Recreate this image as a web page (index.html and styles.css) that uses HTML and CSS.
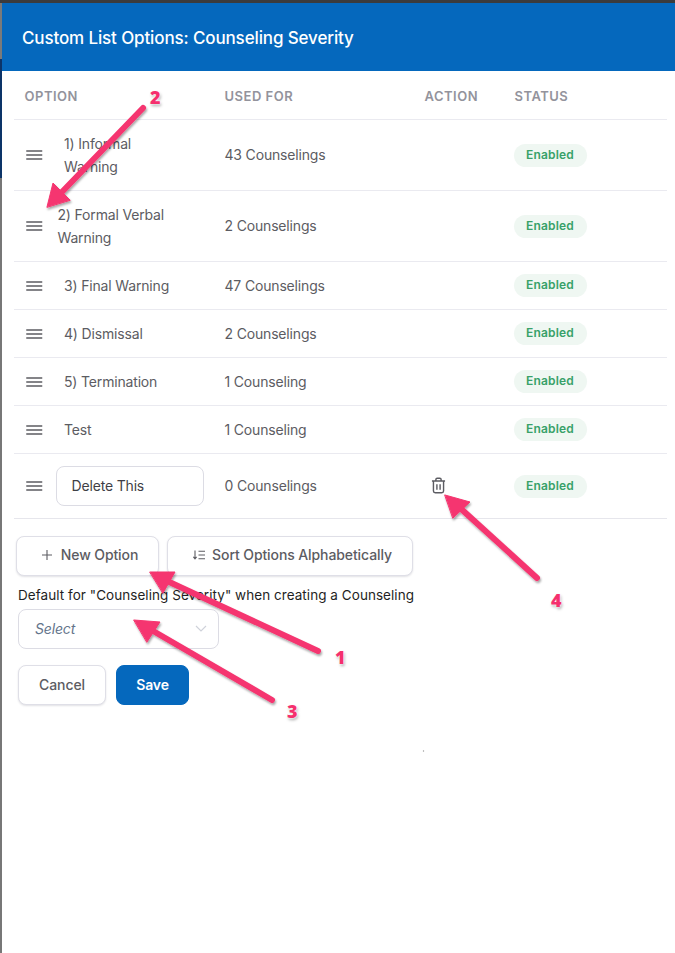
FILE: index.html
```html
<!DOCTYPE html>
<html lang="en">
<head>
<meta charset="utf-8">
<title>Custom List Options</title>
<link rel="stylesheet" href="styles.css">
</head>
<body>
<div class="topline"></div>
<div class="shell">
  <div class="edge"></div>
  <main class="modal">
    <header class="modal-head"><h1>Custom List Options: Counseling Severity</h1></header>
    <div class="table-wrap">
      <table class="options">
        <thead>
          <tr><th class="c-option">OPTION</th><th class="c-used">USED FOR</th><th class="c-action">ACTION</th><th class="c-status">STATUS</th></tr>
        </thead>
        <tbody>
          <tr class="tall"><td><div class="opt"><svg class="drag" viewBox="0 0 16 10"><path d="M0 1h16M0 5h16M0 9h16"/></svg><span class="label">1) Informal Warning</span></div></td><td>43 Counselings</td><td></td><td><span class="badge">Enabled</span></td></tr>
          <tr class="tall"><td><div class="opt"><svg class="drag" viewBox="0 0 16 10"><path d="M0 1h16M0 5h16M0 9h16"/></svg><span class="label narrow">2) Formal Verbal Warning</span></div></td><td>2 Counselings</td><td></td><td><span class="badge">Enabled</span></td></tr>
          <tr><td><div class="opt"><svg class="drag" viewBox="0 0 16 10"><path d="M0 1h16M0 5h16M0 9h16"/></svg><span class="label">3) Final Warning</span></div></td><td>47 Counselings</td><td></td><td><span class="badge">Enabled</span></td></tr>
          <tr><td><div class="opt"><svg class="drag" viewBox="0 0 16 10"><path d="M0 1h16M0 5h16M0 9h16"/></svg><span class="label">4) Dismissal</span></div></td><td>2 Counselings</td><td></td><td><span class="badge">Enabled</span></td></tr>
          <tr><td><div class="opt"><svg class="drag" viewBox="0 0 16 10"><path d="M0 1h16M0 5h16M0 9h16"/></svg><span class="label">5) Termination</span></div></td><td>1 Counseling</td><td></td><td><span class="badge">Enabled</span></td></tr>
          <tr><td><div class="opt"><svg class="drag" viewBox="0 0 16 10"><path d="M0 1h16M0 5h16M0 9h16"/></svg><span class="label">Test</span></div></td><td>1 Counseling</td><td></td><td><span class="badge">Enabled</span></td></tr>
          <tr class="edit"><td><div class="opt"><svg class="drag" viewBox="0 0 16 10"><path d="M0 1h16M0 5h16M0 9h16"/></svg><input class="name" type="text" value="Delete This"></div></td><td>0 Counselings</td><td><svg class="trash" viewBox="0 0 16 18"><path d="M1 4.200h14M5.200 4V2.600c0-.9.6-1.400 1.400-1.400h2.800c.8 0 1.400.5 1.400 1.400V4M2.600 4.400v10.400c0 1.100.8 1.900 1.900 1.900h7c1.100 0 1.900-.8 1.900-1.900V4.400M6.300 7.600v6M9.700 7.600v6"/></svg></td><td><span class="badge">Enabled</span></td></tr>
        </tbody>
      </table>
    </div>
    <div class="tools">
      <button class="btn tool" type="button"><svg class="plus" viewBox="0 0 10 10"><path d="M5 0v10M0 5h10"/></svg>New Option</button>
      <button class="btn tool" type="button"><svg class="sort" viewBox="0 0 12 10"><path d="M2 0.500v8M.4 6.800 2 8.800l1.600-2M5.500 1.200H12M5.500 5H12M5.500 8.800H12"/></svg>Sort Options Alphabetically</button>
    </div>
    <p class="default-label">Default for "Counseling Severity" when creating a Counseling</p>
    <div class="select"><span>Select</span><svg class="chev" viewBox="0 0 12 7"><path d="M1 1l5 5 5-5"/></svg></div>
    <div class="actions">
      <button class="btn cancel" type="button">Cancel</button>
      <button class="btn save" type="button">Save</button>
    </div>
  </main>
</div>
<svg class="notes" viewBox="0 0 675 953" aria-hidden="true">
  <defs><filter id="sh" x="-10%" y="-10%" width="120%" height="120%"><feDropShadow dx="1" dy="2" stdDeviation="1.200" flood-color="#000" flood-opacity=".35"/></filter></defs>
  <g class="arrow" filter="url(#sh)">
    <path d="M143 108 60 194"/><path class="head" d="M47 207 53 183 70 200Z"/>
    <path d="M537 578 459 507"/><path class="head" d="M445 495 470 502 453 518Z"/>
    <path d="M318 651 165 580"/><path class="head" d="M150 572 175 572 163 593Z"/>
    <path d="M272 700 148 628"/><path class="head" d="M134 620 160 622 147 642Z"/>
  </g>
  <circle class="speck" cx="423.500" cy="751" r=".7"/>
</svg>
<span class="num n1">1</span><span class="num n2">2</span><span class="num n3">3</span><span class="num n4">4</span>
</body>
</html>
```

FILE: styles.css
```css
* { box-sizing: border-box; }
html, body { margin: 0; height: 100%; }
body { font-family: Inter, "Liberation Sans", sans-serif; background: #fff; color: #4f4f55; font-size: 14px; letter-spacing: -.17px; position: relative; overflow: hidden; }
.topline { height: 3px; background: #3b3b3d; }
.shell { display: flex; height: 950px; }
.edge { width: 2px; flex: none; background: linear-gradient(#7a7a7a 0 56px, #0c3468 56px 175px, #777 175px 100%); }
.modal { flex: 1; min-width: 0; background: #fff; }
.modal-head { height: 68px; background: #0568bd; display: flex; align-items: center; padding: 2px 0 0 20px; }
.modal-head h1 { margin: 0; color: #fff; font-size: 17px; font-weight: 500; line-height: 24px; letter-spacing: -.13px; }
.table-wrap { padding: 0 8px 0 12px; }
.options { width: 653px; border-collapse: collapse; table-layout: fixed; }
.c-option { width: 200px; }
.c-used { width: 200px; }
.c-action { width: 90px; }
.options th { height: 48px; padding: 2px 0 0 10.500px; text-align: left; font-size: 13px; font-weight: 600; color: #93939c; letter-spacing: .5px; border-bottom: 1px solid #eaeaf0; }
.options td { height: 48px; padding: 0 0 0 10.500px; border-bottom: 1px solid #eaeaf0; color: #5c5c62; vertical-align: middle; line-height: 23px; }
.options tr.tall td { height: 71px; }
.options tr.edit td { height: 65px; border-bottom-color: #e6e6ec; }
.opt { display: flex; align-items: center; }
.drag { width: 16.500px; height: 10px; flex: none; margin-left: 1.500px; fill: none; stroke: #5c5c62; stroke-width: 1.500; }
.options tr:nth-child(n+3) .drag { margin-top: 1px; }
.label { margin-left: 21.500px; width: 90px; }
.options tr:nth-child(n+3) .label { width: auto; }
.label.narrow { margin-left: 15px; width: 130px; }
.name { margin-left: 13px; width: 148px; height: 40px; border: 1px solid #dcdce4; border-radius: 8px; padding: 0 15px; font: 14px Inter, "Liberation Sans", sans-serif; letter-spacing: -.17px; color: #3f3f46; background: #fff; }
.trash { width: 15px; height: 17px; margin-left: 6px; fill: none; stroke: #5c5c62; stroke-width: 1.500; display: block; }
.badge { display: inline-block; width: 73px; height: 23px; line-height: 22px; margin-left: -1px; border-radius: 12px; background: #eff7f2; color: #38a169; font-size: 12px; font-weight: 600; text-align: center; letter-spacing: .2px; vertical-align: 1px; }
.tools { display: flex; gap: 8px; padding: 17px 0 0 14px; }
.btn { height: 40px; border-radius: 8px; border: 1px solid #dfdfe7; background: #fff; font: 500 14px Inter, "Liberation Sans", sans-serif; letter-spacing: -.1px; color: #5c5c62; box-shadow: 0 1px 2px rgba(40,40,70,.14); display: flex; align-items: center; justify-content: center; padding: 0; }
.tool:first-child { width: 143px; padding: 0 0 2px 5px; }
.tool:last-child { width: 246px; padding: 0 0 2px 5px; }
.plus { width: 10px; height: 10px; margin-right: 9px; fill: none; stroke: #5c5c62; stroke-width: 1.100; }
.sort { width: 12px; height: 10px; margin-right: 7px; fill: none; stroke: #5c5c62; stroke-width: 1.100; }
.default-label { margin: 11px 0 0 16px; height: 17px; line-height: 17px; font-size: 13.500px; letter-spacing: .05px; color: #1f1f24; white-space: nowrap; }
.select { margin: 5px 0 0 16px; width: 201px; height: 40px; border: 1px solid #dcdce4; border-radius: 8px; display: flex; align-items: center; justify-content: space-between; padding: 0 11px 0 16px; font-style: italic; color: #64748b; }
.chev { width: 12px; height: 7px; fill: none; stroke: #cfd2da; stroke-width: 1.200; }
.actions { display: flex; gap: 10px; margin: 16px 0 0 16px; }
.cancel { width: 88px; }
.save { width: 73px; background: #0568bd; border-color: #0568bd; color: #fff; font-weight: 600; box-shadow: none; }
.notes { position: absolute; left: 0; top: 0; width: 675px; height: 953px; pointer-events: none; }
.arrow path { fill: none; stroke: #f5356f; stroke-width: 6px; stroke-linecap: round; }
.arrow .head { fill: #f5356f; stroke: #f5356f; stroke-width: 1px; stroke-linejoin: round; }
.speck { fill: #9a9a9a; }
.num { position: absolute; font: 800 18px/20px "Open Sans", "Liberation Sans", sans-serif; color: #f5306e; text-shadow: 0 0 2px #fff, 0 0 3px #fff, 1px 2px 3px rgba(0,0,0,.35); }
.n1 { left: 335px; top: 647px; }
.n2 { left: 150px; top: 87px; }
.n3 { left: 287px; top: 701px; }
.n4 { left: 551px; top: 590px; }
```
